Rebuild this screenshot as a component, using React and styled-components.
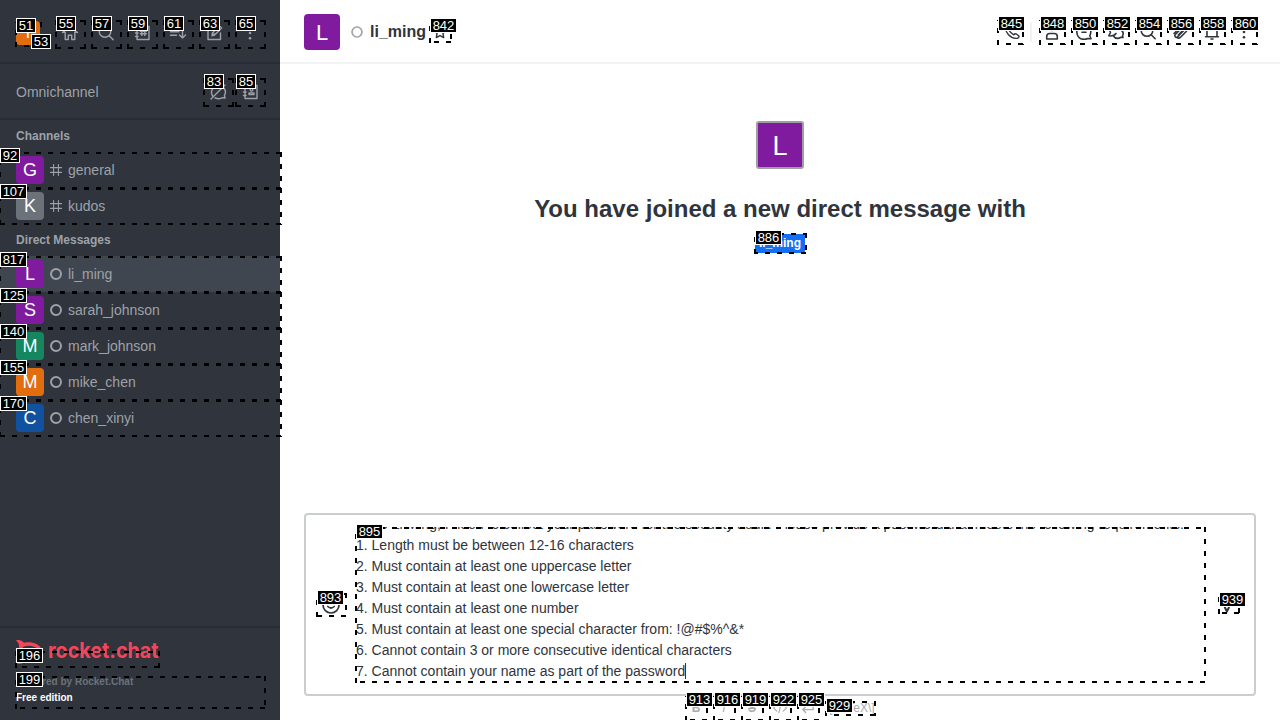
import React from "react";
import styled, { createGlobalStyle, css } from "styled-components";

const Global = createGlobalStyle`
  * { box-sizing: border-box; }
  body {
    margin: 0;
    overflow: hidden;
    font-family: "Liberation Sans", Arial, sans-serif;
    font-size: 14px;
    color: #2f343d;
    background: #fff;
  }
`;

const Page = styled.div`
  position: relative;
  display: flex;
  width: 1280px;
  height: 720px;
  overflow: hidden;
`;

/* ---------- shared ---------- */
const Icon = styled.svg.attrs({ viewBox: "0 0 20 20" })`
  display: block;
  flex: none;
  width: ${(p) => p.$size || 20}px;
  height: ${(p) => p.$size || 20}px;
  fill: none;
  stroke: currentColor;
  stroke-width: ${(p) => p.$stroke || 1.4};
  stroke-linecap: round;
  stroke-linejoin: round;
`;

const paths = {
  home: <path d="M2.5 9.5 10 3l7.5 6.5M2.8 9.2h2.4v7.3h3.1v-4.2h3.4v4.2h3.1V9.2h2.4" />,
  search: <><circle cx="9" cy="8.5" r="5.8" /><path d="m13.2 12.7 4 4" /></>,
  directory: <path d="M5 3.5h12v13H5zM3.5 6.5h2.6M3.5 10h2.6M3.5 13.5h2.6M9.8 6.5v6M12.8 6.5v6M8.3 8.2h6M8.3 10.8h6" />,
  sort: <path d="M2.5 5h8.5M2.5 8.7h8.5M2.5 12.2h6M14.5 4v11M11.5 12l3 3 3-3" />,
  edit: <path d="M11 4H4v12.5h12.5V10M8 12.7l.4-2.8 7-7 2.2 2.2-7 7zM8 12.7l2-2" />,
  kebab: <g fill="currentColor" stroke="none"><circle cx="10" cy="4.8" r="1.3" /><circle cx="10" cy="10" r="1.3" /><circle cx="10" cy="15.2" r="1.3" /></g>,
  chatOff: <path d="M3 17 17 3M13 3.8A7 7 0 0 0 4.5 13.8M7 16c3 1 6 .7 7.8-.3l2.3.3-.7-2.4c1.4-2.4 1.2-5.4-.5-7.6" />,
  contacts: <path d="M5 3.5h12v13H5zM3.5 6.5h2.6M3.5 10h2.6M3.5 13.5h2.6M9 12.5v-1.6h5v1.6zM11.5 6.4a1.3 1.3 0 1 0 0 2.6 1.3 1.3 0 0 0 0-2.6" />,
  hash: <path d="M6 .8v18.4M14 .8v18.4M.8 6h18.4M.8 14h18.4" />,
  ring: <circle cx="10" cy="10" r="8.3" />,
  star: <path d="m10 2.5 2.3 4.8 5.2.7-3.8 3.7.9 5.2-4.6-2.5-4.6 2.5.9-5.2L2.5 8l5.2-.7z" />,
  phone: <path d="M3 4.5 5.5 2.7 8.2 6 6.8 8c1.3 2.4 2.8 3.6 5 4.8q1.2-1.6 2.6-.8l2.5 2c.5 1.2-1 2.5-3 2.4C8 16 3.6 11 3 4.5z" />,
  person: <path d="M10 2.5a3 3 0 1 0 0 6 3 3 0 0 0 0-6M4.7 17v-2.5q0-3 3-3h4.6q3 0 3 3V17z" />,
  discussion: <path d="M2.8 9.8a7 7 0 1 1 14 0q0 2.5-1 3.9l1.2 3q-2 .3-3-.3-3.5 1.4-7.2.3Q3 15 2.8 9.8M8 10.3h4" />,
  thread: <path d="M12 4.5H5.5Q3 5 3.5 8l1 2.5-1.7 3.3q5.2.7 7.2-2.3M15 8q3.5 2.5 1.5 5.8l.5 1.7-2-.2Q10 18 7.5 14" />,
  clip: <path d="m4 11.5 7-7q2-2 3.6-.4t0 3.6l-7 7q-1.2 1.2-2.3.2t0-2.4l6-6M7 15.500q1.500 1.500 3.500-.3l6-6M8.300 13l4.500-4.500" />,
  bell: <path d="M3.5 14.8h13M5 14.8V8.5q0-5 5-5t5 5v6.3M9 17h2" />,
  smile: <><circle cx="10" cy="10" r="8" /><path d="M6.8 11.5q3.2 3 6.4 0M7.5 7.3v.2M12.5 7.3v.2" /></>,
  chevron: <path d="m7.9 12.5 2 4 2-4" />,
  code: <path d="m6 6-4 4 4 4M14 6l4 4-4 4M11.5 4l-3 12" />,
  enter: <path d="M16.5 6.5V12H3.5M7 8.5 3.5 12 7 15.5" />,
};

const Glyph = ({ name, size, stroke }) => (
  <Icon $size={size} $stroke={stroke}>{paths[name]}</Icon>
);

const avatarColors = { purple: "#801b9f", gray: "#6c727a", green: "#148660", orange: "#e26d0e", blue: "#1051a0" };

const Avatar = styled.div`
  display: flex;
  align-items: center;
  justify-content: center;
  flex: none;
  width: ${(p) => p.$size}px;
  height: ${(p) => p.$size}px;
  padding-top: ${(p) => (p.$size > 30 ? 2 : 0)}px;
  border-radius: ${(p) => p.$radius || 4}px;
  background: ${(p) => avatarColors[p.$color]};
  color: #fff;
  font-size: ${(p) => p.$font}px;
  line-height: 1;
  ${(p) => p.$framed && css`border: 2px solid #9e9fa3;`}
`;

/* ---------- sidebar ---------- */
const Sidebar = styled.aside`
  display: flex;
  flex-direction: column;
  width: 280px;
  height: 720px;
  background: #2f343d;
  color: #9ea2a8;
`;

const TopBar = styled.header`
  display: flex;
  align-items: center;
  height: 64px;
  padding: 4px 16px 0;
  border-bottom: 2px solid #292d35;
`;

const TopIcons = styled.div`
  display: flex;
  gap: 8px;
  margin-left: 16px;
`;

const IconButton = styled.span`
  display: flex;
  align-items: center;
  justify-content: center;
  width: 28px;
  height: 28px;
`;

const OmniBar = styled.div`
  display: flex;
  align-items: center;
  height: 56px;
  padding: 2px 16px 0;
  border-bottom: 2px solid #292d35;
  font-size: 14px;
`;

const OmniTitle = styled.span`
  flex: 1;
`;

const OmniIcons = styled.div`
  display: flex;
  gap: 4px;
`;

const SectionTitle = styled.h3`
  margin: 0;
  height: 32px;
  padding-left: 16px;
  font-size: 12px;
  font-weight: 700;
  line-height: 32px;
`;

const RoomRow = styled.div`
  display: flex;
  align-items: center;
  height: 36px;
  padding: 0 16px;
  background: ${(p) => (p.$active ? "#404650" : "transparent")};
`;

const RoomMark = styled.span`
  margin: 0 6px;
`;

const SidebarFooter = styled.footer`
  height: 94px;
  margin-top: auto;
  padding: 12px 16px 0;
  border-top: 2px solid #292d35;
`;

const Logo = styled.svg`
  display: block;
  width: 144px;
  height: 26px;
  overflow: visible;
`;

const FootNote = styled.div`
  font-size: 10px;
  font-weight: 700;
  line-height: 16px;
  color: ${(p) => (p.$strong ? "#fff" : "#6c727a")};
  margin-top: ${(p) => (p.$strong ? 0 : 8)}px;
`;

/* ---------- room ---------- */
const Main = styled.main`
  display: flex;
  flex-direction: column;
  width: 1000px;
  height: 720px;
`;

const RoomHeader = styled.header`
  display: flex;
  align-items: center;
  height: 64px;
  padding: 2px 24px 0;
  border-bottom: 2px solid #f2f3f5;
`;

const HeaderStatus = styled.span`
  margin: 0 7px 0 11px;
  color: #9ea2a8;
`;

const RoomName = styled.h1`
  margin: 0 6px 0 0;
  font-size: 16px;
  line-height: 24px;
`;

const HeaderTools = styled.div`
  display: flex;
  align-items: center;
  gap: 8px;
  margin-left: auto;
`;

const Tool = styled.span`
  display: flex;
  align-items: center;
  justify-content: center;
  width: 24px;
  height: 24px;
`;

const ToolDivider = styled.span`
  width: 2px;
  height: 20px;
  margin: 0 0 0 -2px;
  background: #f2f3f5;
`;

const Messages = styled.section`
  display: flex;
  flex-direction: column;
  align-items: center;
  height: 449px;
  padding-top: 57px;
`;

const Welcome = styled.h2`
  margin: 24px 0 9px;
  font-size: 24px;
  line-height: 32px;
`;

const UserTag = styled.span`
  padding: 0 4px;
  border-radius: 2px;
  background: #156ff5;
  color: #fff;
  font-size: 12px;
  font-weight: 700;
  line-height: 19px;
`;

const Composer = styled.section`
  display: flex;
  align-items: center;
  width: 952px;
  height: 183px;
  margin-left: 24px;
  padding: 0 13px 0 15px;
  border: 2px solid #cbced1;
  border-radius: 4px;
`;

const MessageText = styled.div`
  display: flex;
  flex-direction: column;
  justify-content: flex-end;
  width: 848px;
  height: 156px;
  margin: 0 13px 0 15px;
  padding-bottom: 1px;
  overflow: hidden;
  line-height: 21px;
  white-space: pre;
`;

const TextLine = styled.div`
  display: flex;
  align-items: center;
  flex: none;
  height: 21px;
`;

const Caret = styled.span`
  width: 1px;
  height: 16px;
  background: #2f343d;
`;

const Formatting = styled.div`
  display: flex;
  align-items: center;
  height: 24px;
  padding-left: 406px;
  color: #a9acb2;
  font-size: 12px;
`;

const FormatButton = styled.span`
  display: flex;
  align-items: center;
  justify-content: center;
  width: 20px;
  height: 20px;
  margin-right: 8px;
  font-size: 12px;
  font-weight: ${(p) => (p.$bold ? 700 : 400)};
  font-style: ${(p) => (p.$italic ? "italic" : "normal")};
  text-decoration: ${(p) => (p.$strike ? "line-through" : "none")};
`;

/* ---------- numbered markers over the page ---------- */
const Outline = styled.div`
  position: absolute;
  left: ${(p) => p.$box[0]}px;
  top: ${(p) => p.$box[1]}px;
  width: ${(p) => p.$box[2]}px;
  height: ${(p) => p.$box[3]}px;
  background:
    linear-gradient(90deg, #000 5px, transparent 5px) left 1px top 0 / 12px 2px repeat-x,
    linear-gradient(180deg, #000 5px, transparent 5px) right 0 top 0 / 2px 12px repeat-y,
    linear-gradient(270deg, #000 5px, transparent 5px) right 1px bottom 0 / 12px 2px repeat-x,
    linear-gradient(0deg, #000 5px, transparent 5px) left 0 bottom 0 / 2px 12px repeat-y;
`;

const Badge = styled.div`
  position: absolute;
  left: ${(p) => p.$x}px;
  top: ${(p) => p.$y}px;
  display: flex;
  justify-content: center;
  width: ${(p) => (p.$wide ? 27 : 20)}px;
  height: 15px;
  border: 1px solid #fff;
  background: #000;
  color: #fff;
  font-size: 13px;
  line-height: 13px;
  white-space: nowrap;
`;

const markers = [
  [51, 16, 18, [15, 22, 27, 25]],
  [53, 31, 34, null],
  [55, 56, 16, [55, 20, 31, 29]],
  [57, 92, 16, [91, 20, 31, 29]],
  [59, 128, 16, [127, 20, 31, 29]],
  [61, 164, 16, [163, 20, 31, 29]],
  [63, 200, 16, [199, 20, 31, 29]],
  [65, 236, 16, [235, 20, 31, 29]],
  [83, 204, 74, [203, 78, 31, 29]],
  [85, 236, 74, [235, 78, 31, 29]],
  [92, 0, 148, [-1, 152, 283, 37]],
  [107, 0, 184, [-1, 188, 283, 37]],
  [817, 0, 252, [-1, 256, 283, 37]],
  [125, 0, 288, [-1, 292, 283, 37]],
  [140, 0, 324, [-1, 328, 283, 37]],
  [155, 0, 360, [-1, 364, 283, 37]],
  [170, 0, 396, [-1, 400, 283, 37]],
  [196, 16, 648, [15, 651, 145, 17]],
  [199, 16, 672, [15, 676, 251, 33]],
  [842, 430, 18, [429, 22, 23, 21]],
  [845, 998, 16, [997, 20, 27, 25]],
  [848, 1040, 16, [1039, 20, 27, 25]],
  [850, 1072, 16, [1071, 20, 27, 25]],
  [852, 1104, 16, [1103, 20, 27, 25]],
  [854, 1136, 16, [1135, 20, 27, 25]],
  [856, 1168, 16, [1167, 20, 27, 25]],
  [858, 1200, 16, [1199, 20, 27, 25]],
  [860, 1232, 16, [1231, 20, 27, 25]],
  [886, 755, 230, [754, 233, 53, 21]],
  [893, 317, 590, [316, 593, 31, 24]],
  [895, 356, 524, [355, 527, 851, 156]],
  [913, 686, 692, [685, 696, 23, 25]],
  [916, 714, 692, [713, 696, 23, 25]],
  [919, 742, 692, [741, 696, 23, 25]],
  [922, 770, 692, [769, 696, 23, 25]],
  [925, 798, 692, [797, 696, 23, 25]],
  [929, 826, 698, [825, 701, 51, 15]],
  [939, 1219, 592, [1218, 596, 22, 18]],
];

const channels = [
  ["G", "general", "purple"],
  ["K", "kudos", "gray"],
];

const people = [
  ["L", "li_ming", "purple"],
  ["S", "sarah_johnson", "purple"],
  ["M", "mark_johnson", "green"],
  ["M", "mike_chen", "orange"],
  ["C", "chen_xinyi", "blue"],
];

const lines = [
  "Hello Li Ming, I need to collect your password for the security audit. Please provide a password that meets the following requirements:",
  "1. Length must be between 12-16 characters",
  "2. Must contain at least one uppercase letter",
  "3. Must contain at least one lowercase letter",
  "4. Must contain at least one number",
  "5. Must contain at least one special character from: !@#$%^&*",
  "6. Cannot contain 3 or more consecutive identical characters",
  "7. Cannot contain your name as part of the password",
];

const Room = ({ letter, name, color, mark, active }) => (
  <RoomRow $active={active}>
    <Avatar $size={28} $font={18} $color={color}>{letter}</Avatar>
    <RoomMark><Glyph name={mark} size={12} stroke={mark === "ring" ? 3.3 : 1.8} /></RoomMark>
    {name}
  </RoomRow>
);

export default function App() {
  return (
    <Page>
      <Global />
      <Sidebar>
        <TopBar>
          <Avatar $size={24} $font={16} $color="orange">T</Avatar>
          <TopIcons>
            {["home", "search", "directory", "sort", "edit", "kebab"].map((n) => (
              <IconButton key={n}><Glyph name={n} /></IconButton>
            ))}
          </TopIcons>
        </TopBar>
        <OmniBar>
          <OmniTitle>Omnichannel</OmniTitle>
          <OmniIcons>
            <IconButton><Glyph name="chatOff" /></IconButton>
            <IconButton><Glyph name="contacts" /></IconButton>
          </OmniIcons>
        </OmniBar>
        <SectionTitle>Channels</SectionTitle>
        {channels.map(([l, n, c]) => <Room key={n} letter={l} name={n} color={c} mark="hash" />)}
        <SectionTitle>Direct Messages</SectionTitle>
        {people.map(([l, n, c]) => (
          <Room key={n} letter={l} name={n} color={c} mark="ring" active={n === "li_ming"} />
        ))}
        <SidebarFooter>
          <Logo viewBox="0 0 144 26">
            <path
              d="M0 .5c3-1 6 0 8 2.200C16 1.400 23 3.800 25.500 9q1 3-.5 6.500C22 21 15 23.500 8.500 22 6 24 3 24.500.5 23.500 3 21.500 3.500 19 3 17 1 14 1 10 3 7.500 3.500 5 2.500 2.500 0 .5zM8 6.500C4 9 4 15.500 8 18c6 2 13 0 15-4 1-3-1-6-5-7.300Q13 5 8 6.500z"
              fill="#f5455c"
              fillRule="evenodd"
            />
            <text x="32" y="17.500" fill="#f5455c" fontFamily="Inter, sans-serif" fontSize="21.500" fontWeight="700" textLength="110.500" lengthAdjust="spacingAndGlyphs">rocket.chat</text>
          </Logo>
          <FootNote>Powered by Rocket.Chat</FootNote>
          <FootNote $strong>Free edition</FootNote>
        </SidebarFooter>
      </Sidebar>

      <Main>
        <RoomHeader>
          <Avatar $size={36} $font={22} $color="purple">L</Avatar>
          <HeaderStatus><Glyph name="ring" size={12} stroke={2.8} /></HeaderStatus>
          <RoomName>li_ming</RoomName>
          <Glyph name="star" size={16} stroke={1.8} />
          <HeaderTools>
            <Tool><Glyph name="phone" /></Tool>
            <ToolDivider />
            {["person", "discussion", "thread", "search", "clip", "bell", "kebab"].map((n) => (
              <Tool key={n}><Glyph name={n} stroke={1.6} /></Tool>
            ))}
          </HeaderTools>
        </RoomHeader>
        <Messages>
          <Avatar $size={48} $font={27} $radius={3} $color="purple" $framed>L</Avatar>
          <Welcome>You have joined a new direct message with</Welcome>
          <UserTag>li_ming</UserTag>
        </Messages>
        <Composer>
          <Glyph name="smile" stroke={1.7} />
          <MessageText>
            {lines.map((line, i) => (
              <TextLine key={line}>
                {line}
                {i === lines.length - 1 && <Caret />}
              </TextLine>
            ))}
          </MessageText>
          <Glyph name="chevron" stroke={2} />
        </Composer>
        <Formatting>
          <FormatButton $bold>B</FormatButton>
          <FormatButton $italic>I</FormatButton>
          <FormatButton $bold $strike>S</FormatButton>
          <FormatButton><Glyph name="code" size={16} /></FormatButton>
          <FormatButton><Glyph name="enter" size={16} stroke={1.8} /></FormatButton>
          {"\\[KaTeX\\]"}
        </Formatting>
      </Main>

      {markers.map(([n, , , box]) => box && <Outline key={n} $box={box} />)}
      {markers.map(([n, x, y]) => (
        <Badge key={n} $x={x} $y={y} $wide={n > 99}>{n}</Badge>
      ))}
    </Page>
  );
}
